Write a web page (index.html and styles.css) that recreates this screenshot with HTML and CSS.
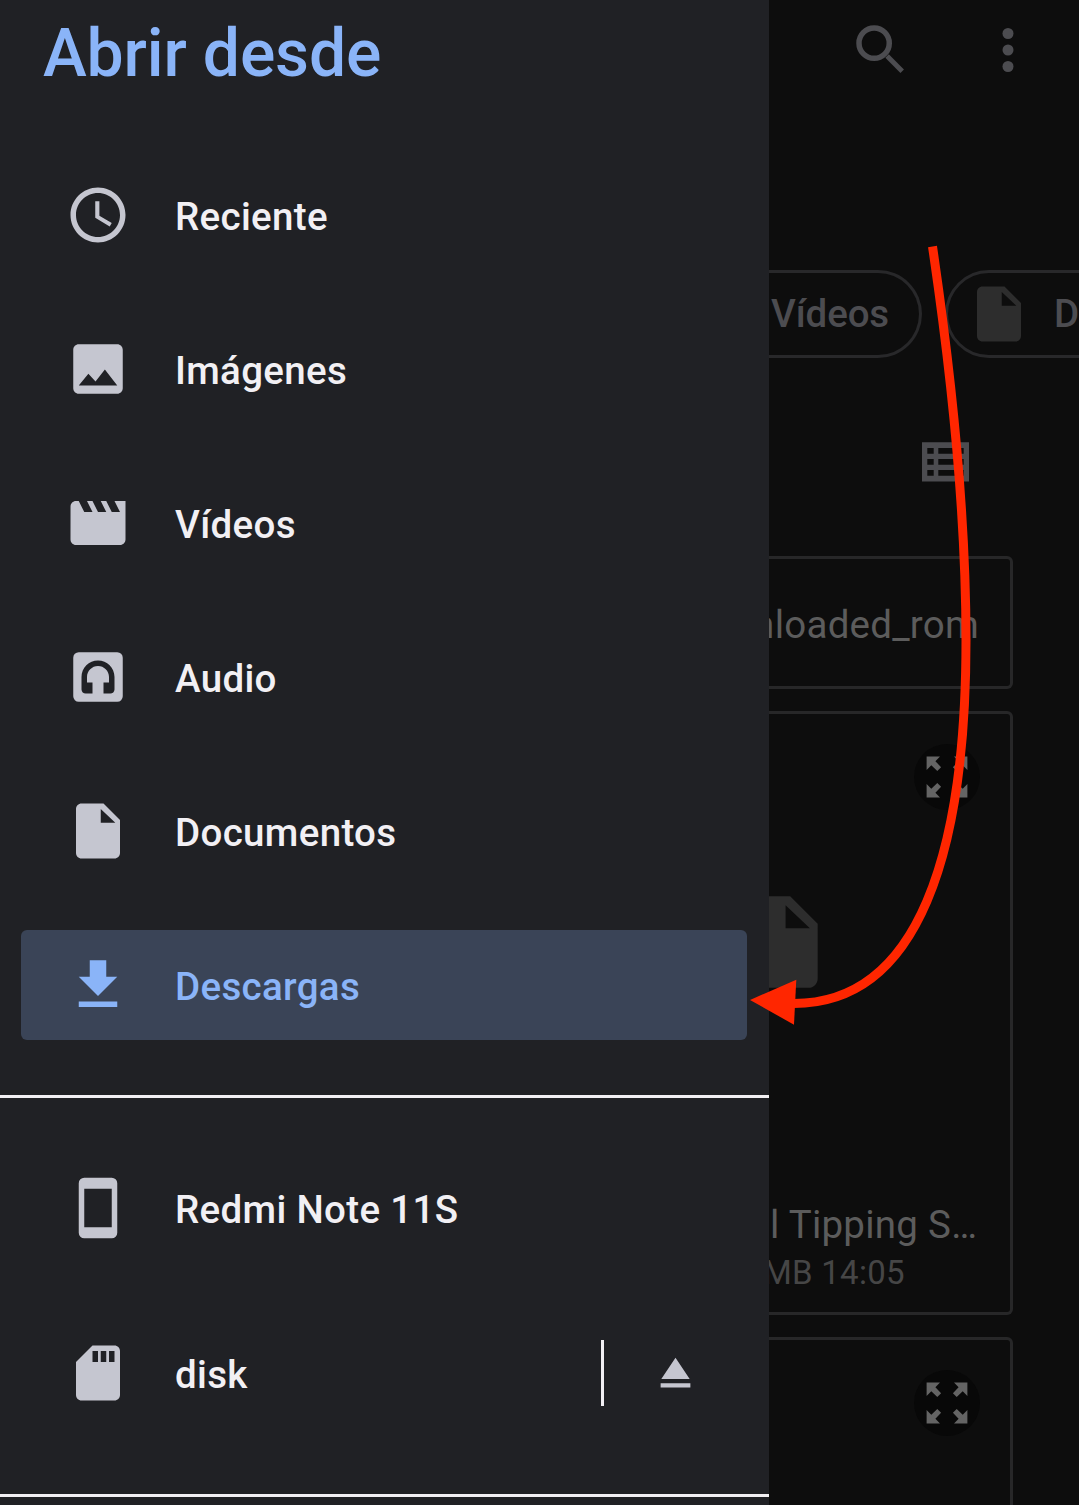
FILE: index.html
```html
<!DOCTYPE html>
<html lang="es">
<head>
<meta charset="utf-8">
<title>Abrir desde</title>
<link rel="stylesheet" href="styles.css">
</head>
<body>
<svg class="defs" aria-hidden="true">
  <symbol id="file" viewBox="0 0 24 24"><path fill-rule="evenodd" d="M6 2h8l6 6v12c0 1.100-.9 2-2 2H6c-1.100 0-2-.9-2-2V4c0-1.100.9-2 2-2zm7 2v5h5.300z"/></symbol>
  <symbol id="expand" viewBox="0 0 66 66"><path d="M12.600 12.600H26l-4.600 4.600 5.700 6-3.800 3.800-6-5.700-4.700 4.700z"/><path d="M53.400 12.600H40l4.600 4.600-5.700 6 3.800 3.800 6-5.700 4.700 4.700z"/><path d="M12.600 53.400H26l-4.600-4.600 5.700-6-3.800-3.800-6 5.700-4.700-4.700z"/><path d="M53.400 53.400H40l4.600-4.600-5.700-6 3.800-3.800 6 5.700 4.700-4.700z"/></symbol>
</svg>
<div class="screen">
  <aside class="drawer">
    <h1 class="title">Abrir desde</h1>
    <nav class="group">
      <a class="row"><svg class="icon" viewBox="0 0 24 24"><path d="M11.990 2C6.470 2 2 6.480 2 12s4.470 10 9.990 10C17.520 22 22 17.520 22 12S17.520 2 11.990 2zM12 20c-4.420 0-8-3.580-8-8s3.580-8 8-8 8 3.580 8 8-3.580 8-8 8zm.5-13H11v6l5.250 3.150.75-1.230-4.500-2.670z"/></svg><span class="label">Reciente</span></a>
      <a class="row"><svg class="icon" viewBox="0 0 24 24"><path fill-rule="evenodd" d="M21 19V5c0-1.100-.9-2-2-2H5c-1.100 0-2 .9-2 2v14c0 1.100.9 2 2 2h14c1.100 0 2-.9 2-2zM8.500 13.700l2.600 2.800 3.400-4.300L19 18H5z"/></svg><span class="label">Imágenes</span></a>
      <a class="row"><svg class="icon" viewBox="0 0 24 24"><path d="M18 4l2 4h-3l-2-4h-2l2 4h-3l-2-4H8l2 4H7L5 4H4c-1.100 0-1.990.9-1.990 2L2 18c0 1.100.9 2 2 2h16c1.100 0 2-.9 2-2V4h-4z"/></svg><span class="label">Vídeos</span></a>
      <a class="row"><svg class="icon" viewBox="0 0 24 24"><path fill-rule="evenodd" d="M5 3h14a2 2 0 0 1 2 2v14a2 2 0 0 1-2 2H5a2 2 0 0 1-2-2V5a2 2 0 0 1 2-2zM12 6c-3.300 0-6 2.700-6 6v4.500c0 .8.700 1.500 1.500 1.500H10v-4H8v-2c0-2.200 1.800-4 4-4s4 1.800 4 4v2h-2v4h2.500c.8 0 1.500-.7 1.500-1.500V12c0-3.300-2.700-6-6-6z"/></svg><span class="label">Audio</span></a>
      <a class="row"><svg class="icon"><use href="#file"/></svg><span class="label">Documentos</span></a>
      <a class="row selected"><svg class="icon" viewBox="0 0 24 24"><path d="M19 9h-4V3H9v6H5l7 7 7-7zM5 18v2h14v-2H5z"/></svg><span class="label">Descargas</span></a>
    </nav>
    <div class="devices">
      <a class="row"><svg class="icon" viewBox="0 0 24 24"><path fill-rule="evenodd" d="M7 1h10a2 2 0 0 1 2 2v18a2 2 0 0 1-2 2H7a2 2 0 0 1-2-2V3a2 2 0 0 1 2-2zm0 4v14h10V5z"/></svg><span class="label">Redmi Note 11S</span></a>
      <a class="row"><svg class="icon" viewBox="0 0 24 24"><path fill-rule="evenodd" d="M18 2h-8L4 8v12c0 1.100.9 2 2 2h12c1.100 0 2-.9 2-2V4c0-1.100-.9-2-2-2zM10 4h2v4h-2zm3 0h2v4h-2zm3 0h2v4h-2z"/></svg><span class="label">disk</span><span class="eject"><svg class="eject-icon" viewBox="0 0 24 24"><path d="M5 17h14v2H5zm7-12L5.330 15h13.340z"/></svg></span></a>
    </div>
  </aside>
  <main class="content">
    <header class="toolbar">
      <svg class="icon" viewBox="0 0 24 24"><circle class="lens" cx="9.500" cy="9.500" r="5.500"/><path class="handle" d="M14.200 14.200L19.700 19.700"/></svg>
      <svg class="icon" viewBox="0 0 24 24"><circle cx="12" cy="6" r="2"/><circle cx="12" cy="12" r="2"/><circle cx="12" cy="18" r="2"/></svg>
    </header>
    <div class="chips">
      <div class="chip chip-video"><span>Vídeos</span></div>
      <div class="chip chip-doc"><svg class="icon"><use href="#file"/></svg><span>Documentos</span></div>
    </div>
    <div class="viewbar"><svg class="list-icon" viewBox="0 0 47 40"><path fill-rule="evenodd" d="M0 .3h47v39.300H0zM5.300 6v5.700h6.400V6zm11 0v5.700h25.400V6zm-11 11v5.700h6.400V17zm11 0v5.700h25.400V17zm-11 11v5.700h6.400V28zm11 0v5.700h25.400V28z"/></svg></div>
    <div class="cards">
      <div class="card folder"><span class="name">downloaded_rom</span></div>
      <div class="card file">
        <div class="badge"><svg class="icon"><use href="#expand"/></svg></div>
        <svg class="thumb"><use href="#file"/></svg>
        <div class="name file-name">l Tipping S…</div>
        <div class="meta">MB 14:05</div>
      </div>
      <div class="card file"><div class="badge"><svg class="icon"><use href="#expand"/></svg></div></div>
    </div>
  </main>
  <svg class="arrow" viewBox="0 0 1079 1505"><path class="arrow-line" d="M932.500 246.500C947 345 966 500 966 640C966 850 920 1005 792 1003.500"/><path class="arrow-head" d="M750 1000l46.300-20.300-2.300 45z"/></svg>
</div>
</body>
</html>
```
FILE: styles.css
```css
* { box-sizing: border-box; }

body {
  margin: 0;
  background: #0d0d0d;
  font-family: Roboto, "Liberation Sans", sans-serif;
}

.defs { position: absolute; width: 0; height: 0; }

.screen {
  position: relative;
  display: grid;
  grid-template-columns: 769px 310px;
  width: 1079px;
  height: 1505px;
  overflow: hidden;
}

.icon { display: block; flex: none; width: 66px; height: 66px; fill: currentColor; }

.drawer { background: #202125; color: #c5c6d0; height: 1505px; overflow: hidden; }

.title {
  margin: 0;
  height: 160px;
  padding: 15px 0 0 43px;
  font-size: 66px;
  line-height: 78px;
  font-weight: 500;
  letter-spacing: -0.15px;
  color: #8ab4f8;
}

.group {
  display: flex;
  flex-direction: column;
  gap: 44px;
  padding: 0 22px 55px 21px;
  border-bottom: 3px solid #f2f0f4;
}

.row {
  display: flex;
  align-items: center;
  gap: 44px;
  height: 110px;
  padding-left: 44px;
  border-radius: 6px;
}

.label {
  padding-top: 3px;
  font-size: 38.5px;
  line-height: 46px;
  font-weight: 500;
  letter-spacing: 0.33px;
  color: #f2f0f4;
}

.selected { background: #3a4457; color: #8ab4f8; }
.selected .label { color: #8ab4f8; }

.devices {
  display: flex;
  flex-direction: column;
  gap: 55px;
  height: 399px;
  padding: 55px 22px 0 21px;
  border-bottom: 3px solid #f2f0f4;
}

.eject {
  display: flex;
  align-items: center;
  justify-content: center;
  width: 146px;
  height: 66px;
  margin-left: auto;
  padding: 0 1px 1px 0;
  border-left: 3px solid #f2f0f4;
}

.eject-icon { width: 51px; height: 51px; fill: currentColor; }

.content { height: 1505px; overflow: hidden; color: #4c4c50; }

.toolbar {
  display: flex;
  gap: 61px;
  height: 270px;
  padding: 17px 0 0 79px;
}

.lens { fill: none; stroke: currentColor; stroke-width: 2; }
.handle { stroke: currentColor; stroke-width: 1.8; }

.chips { display: flex; gap: 23px; height: 88px; }

.chip {
  display: flex;
  flex: none;
  align-items: center;
  height: 88px;
  border: 3px solid #28282a;
  font-size: 38.5px;
  font-weight: 500;
  letter-spacing: -0.15px;
}

.chip span { padding-bottom: 2px; }

.chip-video {
  width: 153px;
  padding-left: 2px;
  border-left: 0;
  border-radius: 0 44px 44px 0;
}

.chip-doc {
  gap: 22px;
  width: 320px;
  padding-left: 18px;
  border-radius: 44px;
}

.chip-doc .icon { color: #2d2d2d; }

.viewbar { height: 198px; padding: 84px 0 0 153px; }
.list-icon { display: block; width: 47px; height: 40px; fill: currentColor; }

.cards { display: flex; flex-direction: column; gap: 22px; width: 244px; }

.card {
  flex: none;
  border: 3px solid #272728;
  border-left: 0;
  border-radius: 0 6px 6px 0;
  overflow: hidden;
}

.folder {
  display: flex;
  align-items: center;
  justify-content: flex-end;
  height: 133px;
  padding: 4px 31px 0 0;
}

.name { font-size: 38.5px; line-height: 46px; letter-spacing: 0.25px; color: #5c5c5c; }

.file { height: 604px; padding-top: 30px; }

.badge {
  width: 66px;
  height: 66px;
  margin-left: 145px;
  border-radius: 50%;
  background: #080808;
  color: #646464;
}

.thumb {
  display: block;
  width: 110px;
  height: 110px;
  margin: 77px 0 0 -43px;
  fill: #2d2d2d;
}

.file-name { margin: 205px 0 0 1px; white-space: nowrap; }

.meta {
  margin: 5px 0 0 -6px;
  font-size: 33px;
  line-height: 39px;
  letter-spacing: 0.25px;
  color: #464646;
}

.arrow { position: absolute; inset: 0; width: 1079px; height: 1505px; }
.arrow-line { fill: none; stroke: #ff2600; stroke-width: 9; }
.arrow-head { fill: #ff2600; }
```
